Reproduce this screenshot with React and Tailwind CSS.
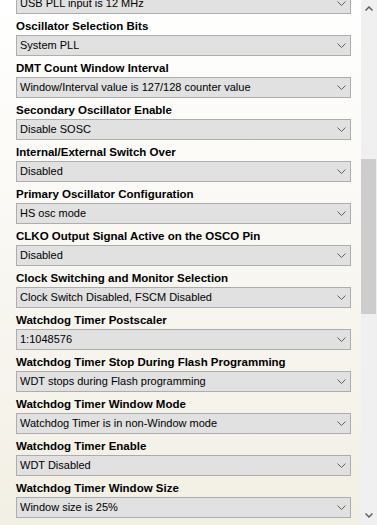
import React from 'react';

const rows = [
  { label: 'Oscillator Selection Bits', value: 'System PLL' },
  { label: 'DMT Count Window Interval', value: 'Window/Interval value is 127/128 counter value' },
  { label: 'Secondary Oscillator Enable', value: 'Disable SOSC' },
  { label: 'Internal/External Switch Over', value: 'Disabled' },
  { label: 'Primary Oscillator Configuration', value: 'HS osc mode' },
  { label: 'CLKO Output Signal Active on the OSCO Pin', value: 'Disabled' },
  { label: 'Clock Switching and Monitor Selection', value: 'Clock Switch Disabled, FSCM Disabled' },
  { label: 'Watchdog Timer Postscaler', value: '1:1048576' },
  { label: 'Watchdog Timer Stop During Flash Programming', value: 'WDT stops during Flash programming' },
  { label: 'Watchdog Timer Window Mode', value: 'Watchdog Timer is in non-Window mode' },
  { label: 'Watchdog Timer Enable', value: 'WDT Disabled' },
  { label: 'Watchdog Timer Window Size', value: 'Window size is 25%' },
];

const Combo = ({ value }) => (
  <div className="flex h-[21px] w-[335px] items-center justify-between border border-[#adadad] bg-[#e1e1e1] pl-[3px] pr-[4px]">
    <span className="truncate text-[11px] leading-[19px] text-black">{value}</span>
    <svg width="9" height="5" viewBox="0 0 9 5" className="shrink-0">
      <path d="M0.5 0.5 L4.5 4.5 L8.5 0.5" fill="none" stroke="#606060" strokeWidth="1" />
    </svg>
  </div>
);

const App = () => {
  return (
    <div
      className="flex h-[525px] w-[377px] overflow-hidden"
      style={{ fontFamily: '"Liberation Sans", Arial, sans-serif' }}
    >
      <div className="h-full flex-1 overflow-hidden bg-gradient-to-b from-white to-[#f2efe4] pl-4">
        <div className="-mt-[7px]">
          <Combo value="USB PLL input is 12 MHz" />
        </div>
        {rows.map((row) => (
          <div key={row.label}>
            <div className="pt-[5px] pb-[2px] text-[11.5px] font-bold leading-[14px] text-black whitespace-nowrap">
              {row.label}
            </div>
            <Combo value={row.value} />
          </div>
        ))}
      </div>

      {/* scrollbar */}
      <div className="flex h-full w-[16px] flex-col bg-[#f0f0f0]">
        <div className="flex h-[17px] items-center justify-center">
          <svg width="8" height="5" viewBox="0 0 8 5">
            <path d="M0.5 4.5 L4 1 L7.5 4.5" fill="none" stroke="#606060" strokeWidth="1.5" />
          </svg>
        </div>
        <div className="h-[142px]" />
        <div className="h-[155px] w-[15px] bg-[#cdcdcd]" />
        <div className="flex-1" />
        <div className="flex h-[20px] items-center justify-center">
          <svg width="8" height="5" viewBox="0 0 8 5">
            <path d="M0.5 0.5 L4 4 L7.5 0.5" fill="none" stroke="#606060" strokeWidth="1.5" />
          </svg>
        </div>
      </div>
    </div>
  );
};

export default App;
